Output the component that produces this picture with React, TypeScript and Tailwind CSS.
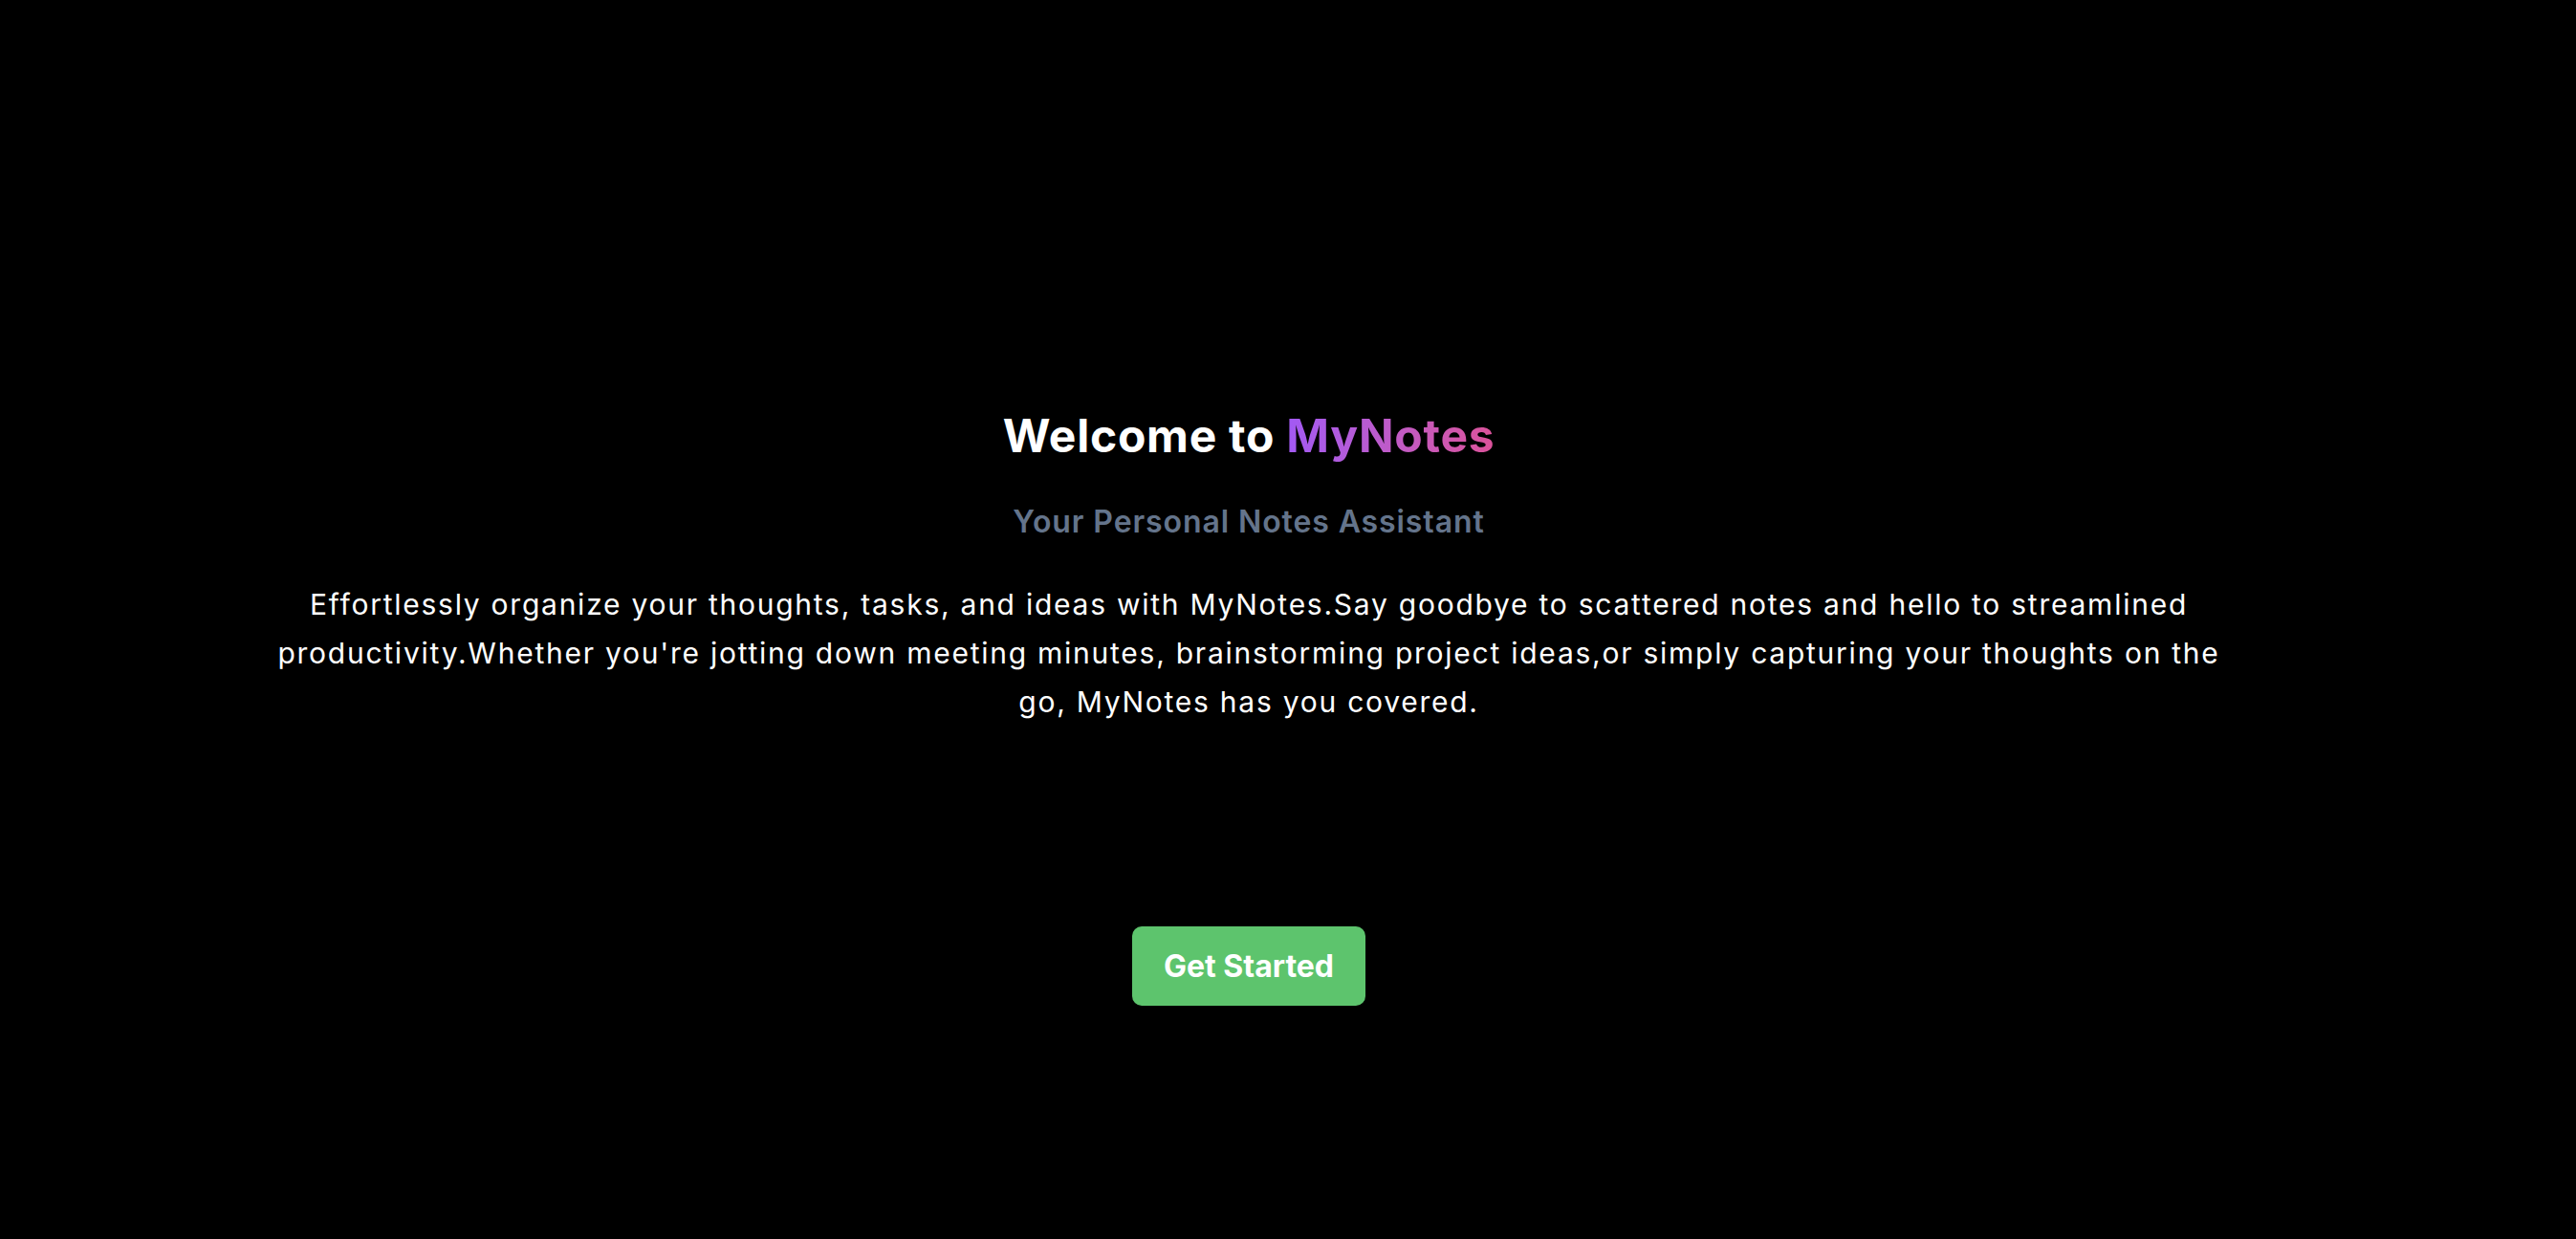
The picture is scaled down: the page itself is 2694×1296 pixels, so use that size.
export default function App() {
  return (
    <main className="min-h-screen bg-black flex flex-col items-center pt-[432px] pr-[82px] font-['Inter',sans-serif] text-white">
      <h1 className="text-[48px] leading-none font-bold tracking-[0.75px]">
        Welcome to{' '}
        <span className="bg-gradient-to-r from-[#a259f4] to-[#dc529a] bg-clip-text text-transparent">MyNotes</span>
      </h1>
      <h2 className="mt-[42px] text-[32px] leading-[48px] font-semibold tracking-[0.9px] text-[#64748b]">
        Your Personal Notes Assistant
      </h2>
      <p className="mt-[37px] max-w-[2060px] text-center text-[30px] leading-[51px] tracking-[1.75px]">
        Effortlessly organize your thoughts, tasks, and ideas with MyNotes.Say goodbye to scattered notes and hello to
        streamlined productivity.Whether you're jotting down meeting minutes, brainstorming project ideas,or simply
        capturing your thoughts on the go, MyNotes has you covered.
      </p>
      <button className="mt-[209px] h-[83px] px-[33px] rounded-[10px] bg-[#5dc46d] text-[32px] font-bold text-white">
        Get Started
      </button>
    </main>
  );
}
